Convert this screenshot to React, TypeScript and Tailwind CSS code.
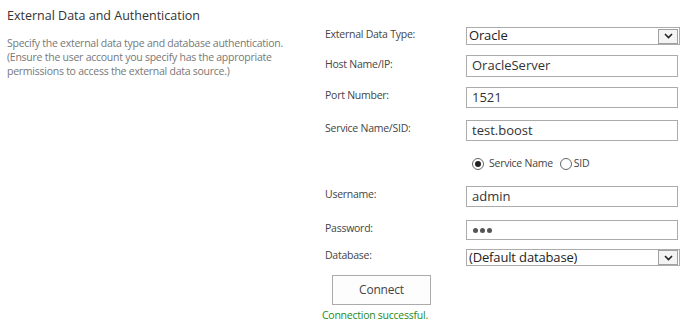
import React from "react"

const font = { fontFamily: '"Open Sans", "Noto Sans", sans-serif' }

function Chevron() {
  return (
    <svg width="9" height="6" viewBox="0 0 9 6" className="block">
      <path d="M1 1 L4.5 4.5 L8 1" fill="none" stroke="#222" strokeWidth="1.6" />
    </svg>
  )
}

function Select({ value }: { value: string }) {
  return (
    <div className="flex h-full w-[214px] items-center border border-[#ababab] bg-white">
      <span className="flex-1 pl-[2px] text-[13px] tracking-[-0.15px] text-[#222]">{value}</span>
      <span className="mr-[1px] flex h-[15px] w-[20px] items-center justify-center border border-[#a0a0a0] bg-[#f4f4f4]">
        <Chevron />
      </span>
    </div>
  )
}

function Input({ value }: { value: string }) {
  return (
    <div className="flex h-full w-[212px] items-center border border-[#ababab] bg-white pl-[5px] text-[13px] text-[#333]">
      {value}
    </div>
  )
}

function Row({ label, className, children }: { label: string; className: string; children: React.ReactNode }) {
  return (
    <div className={`flex items-center ${className}`}>
      <div className="w-[144px] pb-[3px] pl-[3px] text-[10.5px] tracking-[-0.25px] text-[#444]">{label}</div>
      {children}
    </div>
  )
}

function Radio({ checked }: { checked?: boolean }) {
  return (
    <span className="flex h-[12px] w-[12px] items-center justify-center rounded-full border border-[#666] bg-white">
      {checked && <span className="h-[6px] w-[6px] rounded-full bg-[#222]" />}
    </span>
  )
}

export default function App() {
  return (
    <div className="flex h-[329px] w-[688px] bg-white" style={font}>
      <div className="w-[322px] pl-[7px] pt-[8px]">
        <h2 className="text-[12.5px] leading-[16px] text-[#333]">External Data and Authentication</h2>
        <p className="mt-[12px] text-[10.5px] leading-[14px] tracking-[-0.25px] text-[#777]">
          Specify the external data type and database authentication.
          <br />
          (Ensure the user account you specify has the appropriate
          <br />
          permissions to access the external data source.)
        </p>
      </div>
      <div className="flex flex-col pt-[27px]">
        <Row label="External Data Type:" className="h-[18px]">
          <Select value="Oracle" />
        </Row>
        <Row label="Host Name/IP:" className="mt-[10px] h-[22px]">
          <Input value="OracleServer" />
        </Row>
        <Row label="Port Number:" className="mt-[10px] h-[21px]">
          <Input value="1521" />
        </Row>
        <Row label="Service Name/SID:" className="mt-[12px] h-[21px]">
          <Input value="test.boost" />
        </Row>
        <div className="mt-[15px] flex h-[16px] items-center pl-[150px] text-[10.5px] tracking-[-0.25px] text-[#444]">
          <Radio checked />
          <span className="ml-[5px]">Service Name</span>
          <span className="ml-[7px]">
            <Radio />
          </span>
          <span className="ml-[2px]">SID</span>
        </div>
        <Row label="Username:" className="mt-[14px] h-[21px]">
          <Input value="admin" />
        </Row>
        <Row label="Password:" className="mt-[13px] h-[20px]">
          <div className="flex h-full w-[212px] items-center gap-[2px] border border-[#ababab] bg-white pl-[6px]">
            <span className="h-[5px] w-[5px] rounded-full bg-[#555]" />
            <span className="h-[5px] w-[5px] rounded-full bg-[#555]" />
            <span className="h-[5px] w-[5px] rounded-full bg-[#555]" />
          </div>
        </Row>
        <Row label="Database:" className="mt-[9px] h-[17px]">
          <Select value="(Default database)" />
        </Row>
        <div className="mt-[9px] pl-[10px]">
          <button className="h-[30px] w-[99px] border border-[#ababab] bg-[#fdfdfd] text-[12px] tracking-[-0.2px] text-[#444]">
            Connect
          </button>
        </div>
        <div className="mt-[3px] text-[10.5px] leading-[14px] tracking-[-0.25px] text-[#1e8a1e]">Connection successful.</div>
      </div>
    </div>
  )
}
